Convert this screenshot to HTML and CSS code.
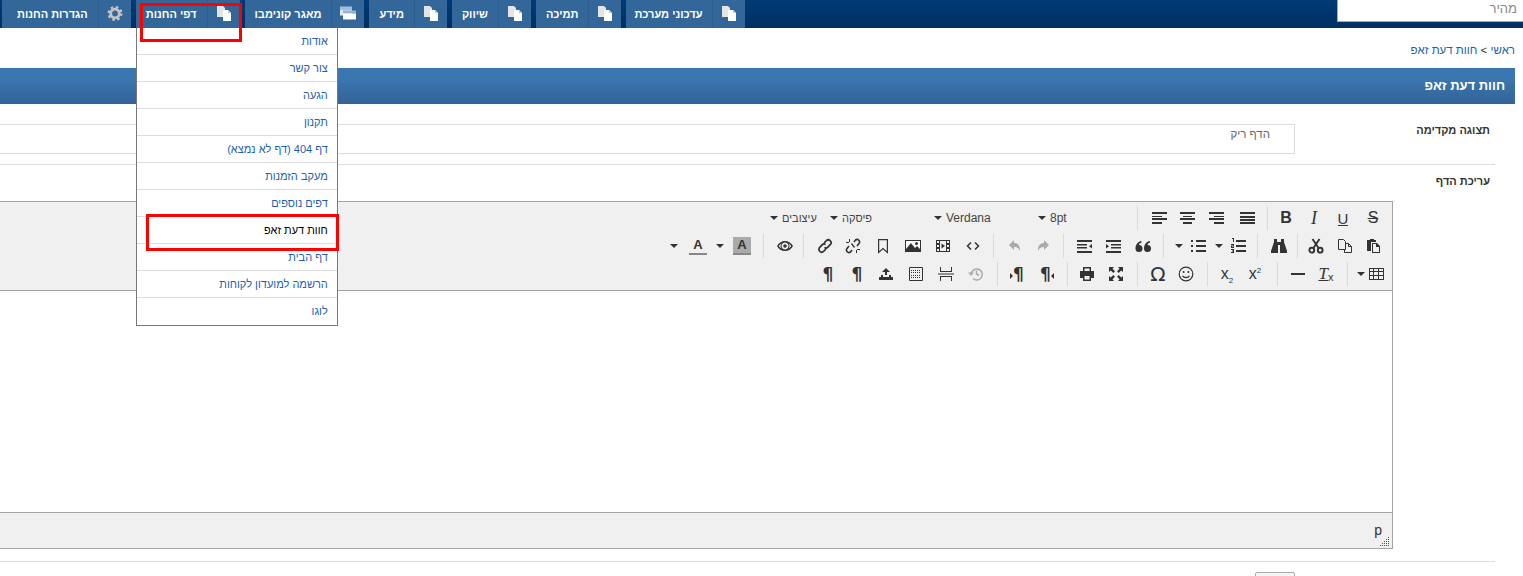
FILE: index.html
```html
<!DOCTYPE html>
<html lang="he" dir="rtl">
<head>
<meta charset="utf-8">
<title>חוות דעת זאפ</title>
<link rel="stylesheet" href="styles.css">
</head>
<body>
<svg class="sprite" xmlns="http://www.w3.org/2000/svg">
  <symbol id="pg" viewBox="0 0 16 15"><path fill="#e4e4e4" d="M1 0h6l2 2v9H1z"/><path fill="#fff" d="M7 4h5l3 3v8H7z"/><path fill="#c8c8c8" d="M12 4l3 3h-3z"/></symbol>
  <symbol id="win" viewBox="0 0 16 14"><path fill="#9fc0e2" d="M0 0h12v3H0z"/><path fill="#dbe8f4" d="M0 3h12v6H0z"/><path fill="#8fb4da" d="M3 4h13v3H3z"/><path fill="#fff" d="M3 7h13v6H3z"/></symbol>
  <symbol id="gear" viewBox="0 0 16 16"><circle cx="8" cy="8" r="4.6" fill="none" stroke="#c4c4c4" stroke-width="3"/><circle cx="8" cy="8" r="6.8" fill="none" stroke="#c4c4c4" stroke-width="2.4" stroke-dasharray="2.7 2.64"/></symbol>
  <symbol id="al" viewBox="0 0 16 16"><path d="M1 2h15v2H1zM1 6h10v1H1zM1 8h15v2H1zM1 12h10v2H1z"/></symbol>
  <symbol id="ac" viewBox="0 0 16 16"><path d="M1 2h15v2H1zM4 6h9v1H4zM1 8h15v2H1zM4 12h9v2H4z"/></symbol>
  <symbol id="ar" viewBox="0 0 16 16"><path d="M1 2h15v2H1zM6 6h10v1H6zM1 8h15v2H1zM6 12h10v2H6z"/></symbol>
  <symbol id="aj" viewBox="0 0 16 16"><path d="M1 2h15v2H1zM1 6h15v2H1zM1 9h15v2H1zM1 12h15v2H1z"/></symbol>
  <symbol id="out" viewBox="0 0 16 16"><path d="M1 2h15v2H1zM1 6h10v1.500H1zM1 9h10v1.500H1zM1 13h15v2H1zM16 6v4.500l-3-2.250z"/></symbol>
  <symbol id="ind" viewBox="0 0 16 16"><path d="M1 2h15v2H1zM6 6h10v1.500H6zM6 9h10v1.500H6zM1 13h15v2H1zM1 6v4.500l3-2.250z"/></symbol>
  <symbol id="quote" viewBox="0 0 16 16"><path d="M4 7a3.500 3.500 0 1 1-3.500 3.500C.5 6.500 3 3.500 6.500 3v1.500C5 5 4 6 4 7zM12.500 7a3.500 3.500 0 1 1-3.500 3.500C9 6.500 11.500 3.500 15 3v1.500c-1.500.5-2.500 1.500-2.500 2.500z"/></symbol>
  <symbol id="bul" viewBox="0 0 16 16"><path d="M1 2h2v2H1zM6 2h10v2H6zM1 7h2v2H1zM6 7h10v2H6zM1 12h2v2H1zM6 12h10v2H6z"/></symbol>
  <symbol id="num" viewBox="0 0 16 16"><path d="M6 2h10v2H6zM6 7h10v2H6zM6 12h10v2H6zM2 0h2v4H3V1H2zM1 6h3v2.500H2v.5h2v1H1V7.500h2V7H1zM1 11h3v4H1v-1h2v-.5H2v-1h1V12H1z"/></symbol>
  <symbol id="bin" viewBox="0 0 16 16"><path d="M3 1h3v3h4V1h3v3l3 9v2H9V7H7v8H0v-2l3-9z"/></symbol>
  <symbol id="cut" viewBox="0 0 16 16"><g fill="none" stroke="#333" stroke-width="1.900"><circle cx="3.800" cy="12.200" r="2.400"/><circle cx="12.200" cy="12.200" r="2.400"/><path d="M5.300 10.300L11.500 1M10.700 10.300L4.500 1"/></g></symbol>
  <symbol id="copy" viewBox="0 0 16 16"><path fill="none" stroke="#333" d="M1.500 1.500h5l2 2v8h-7zM8.500 5.500h3l3 3v6h-7v-3M11.500 5.500v3h3"/></symbol>
  <symbol id="paste" viewBox="0 0 16 16"><path d="M5 1h4v1h2v2H6v9H2V2h3z"/><path d="M7 5h5l3 3v7H7zM8 6v8h6V9h-3V6z" fill-rule="evenodd"/></symbol>
  <symbol id="link" viewBox="0 0 16 16"><g transform="translate(1 1) scale(.875)"><path fill="none" stroke="#333" stroke-width="2" d="M7 4.500l2.500-2.500a2.500 2.500 0 0 1 4.500 4.500L11 9.500a2.500 2.500 0 0 1-3.500 0M9 11.500L6.500 14A2.500 2.500 0 0 1 2 9.500L5 6.500a2.500 2.500 0 0 1 3.500 0"/></g></symbol>
  <symbol id="unlink" viewBox="0 0 16 16"><path fill="none" stroke="#333" stroke-width="1.600" d="M9 4l1.500-2a2.500 2.500 0 0 1 3.500 3.500L12 8M7 12l-1.500 2A2.500 2.500 0 0 1 2 10.500L4 8"/><path d="M1 4h3v1H1zM12 11h3v1h-3zM4 1h1v3H4zM11 12h1v3h-1zM6 6l1-1 3 4-1 1z"/></symbol>
  <symbol id="book" viewBox="0 0 16 16"><path fill="none" stroke="#333" stroke-width="1.200" d="M3.600 1.600h8.800v12.800L8 10.500l-4.400 3.900z"/></symbol>
  <symbol id="img" viewBox="0 0 16 16"><path d="M0 2h16v12H0z"/><path fill="#fff" d="M1 3h14v8l-3-3-2 2-4-5-5 6z"/><circle cx="11.500" cy="5.500" r="1.500"/></symbol>
  <symbol id="media" viewBox="0 0 16 16"><path d="M1 2h14v12H1zM2 3v2h2V3zM2 7v2h2V7zM2 11v2h2v-2zM12 3v2h2V3zM12 7v2h2V7zM12 11v2h2v-2zM5 3v10h6V3z" fill-rule="evenodd"/><path d="M6.500 5.500l3.500 2.500-3.500 2.500z"/></symbol>
  <symbol id="code" viewBox="0 0 16 16"><path fill="none" stroke="#333" stroke-width="1.500" d="M6 4.500L2.500 8 6 11.500M10 4.500L13.500 8 10 11.500"/></symbol>
  <symbol id="undo" viewBox="0 0 16 16"><path d="M7 2L2 7l5 5V9c3 0 5 1 6 4 .5-5-2-8-6-8z"/></symbol>
  <symbol id="redo" viewBox="0 0 16 16"><path d="M9 2l5 5-5 5V9c-3 0-5 1-6 4-.5-5 2-8 6-8z"/></symbol>
  <symbol id="eye" viewBox="0 0 16 16"><path fill-rule="evenodd" d="M8 3c3.500 0 6.500 2 8 5-1.500 3-4.500 5-8 5s-6.500-2-8-5c1.500-3 4.500-5 8-5zM8 4.500a3.500 3.500 0 1 0 .01 0zM1.800 8c.8 1.200 1.700 2.100 2.800 2.800a4.600 4.600 0 0 1 0-5.600C3.500 5.900 2.600 6.800 1.800 8zm12.400 0c-.8-1.200-1.700-2.100-2.800-2.800a4.600 4.600 0 0 1 0 5.600c1.100-.7 2-1.600 2.800-2.800z"/><circle cx="8" cy="8" r="1.800"/></symbol>
  <symbol id="table" viewBox="0 0 16 16"><path fill-rule="evenodd" d="M1 2h15v12H1zM2 3v2h3V3zM6 3v2h4V3zM11 3v2h4V3zM2 6v3h3V6zM6 6v3h4V6zM11 6v3h4V6zM2 10v3h3v-3zM6 10v3h4v-3zM11 10v3h4v-3z"/></symbol>
  <symbol id="hr" viewBox="0 0 16 16"><path d="M1 7h14v2H1z"/></symbol>
  <symbol id="smile" viewBox="0 0 16 16"><circle cx="8" cy="8" r="6.800" fill="none" stroke="#333" stroke-width="1.200"/><circle cx="5.600" cy="6" r="1"/><circle cx="10.400" cy="6" r="1"/><path fill="none" stroke="#333" stroke-width="1.200" d="M4.500 9.800c1.500 2.300 5.500 2.300 7 0"/></symbol>
  <symbol id="full" viewBox="0 0 16 16"><path d="M1 1h5L4.500 2.800 7 5.300 5.300 7 2.800 4.500 1 6zM15 1v5l-1.800-1.500L10.700 7 9 5.300l2.500-2.500L10 1zM1 15v-5l1.800 1.500L5.300 9 7 10.700l-2.500 2.500L6 15zM15 15h-5l1.500-1.800L9 10.700 10.700 9l2.500 2.500L15 10z"/></symbol>
  <symbol id="print" viewBox="0 0 16 16"><path fill-rule="evenodd" d="M4 1h8v4h3v7h-3v3H4v-3H1V5h3zM5.500 2.500V5h5V2.500zM5.500 10v3.500h5V10z"/></symbol>
  <symbol id="restore" viewBox="0 0 16 16"><path fill="none" stroke="#aaa" stroke-width="1.500" d="M3.500 7A5.500 5.500 0 1 1 5 12.500M8.500 4.500V8l2.500 1.500"/><path fill="#aaa" d="M0 6.500h6L3 10z"/></symbol>
  <symbol id="pb" viewBox="0 0 16 16"><path d="M2 1h1v4h10V1h1v5H2zM2 15h1v-4h10v4h1v-5H2zM0 7.500h16v1H0z"/></symbol>
  <symbol id="tpl" viewBox="0 0 16 16"><path fill="none" stroke="#333" d="M1.500 1.500h13v13h-13z"/><path fill="none" stroke="#333" stroke-dasharray="1 1" d="M3 4.500h10M3 6.500h10M3 9.500h10M3 11.500h10"/></symbol>
  <symbol id="ins" viewBox="0 0 16 16"><path d="M7 6V9h2V6h3L8 2 4 6zM1 11h14v3H1zM3 9h2v2H3zM11 9h2v2h-2z"/></symbol>
  <symbol id="grip" viewBox="0 0 10 10"><path fill="#8a2a9e" d="M8 0h1v1H8zM6 2h1v1H6zM8 2h1v1H8zM4 4h1v1H4zM6 4h1v1H6zM8 4h1v1H8zM2 6h1v1H2zM4 6h1v1H4zM6 6h1v1H6zM8 6h1v1H8zM0 8h1v1H0zM2 8h1v1H2zM4 8h1v1H4zM6 8h1v1H6zM8 8h1v1H8z"/></symbol>
</svg>

<header class="topbar">
  <nav class="nav">
    <div class="item item-updates"><span class="ico"><svg class="pg"><use href="#pg"/></svg></span><span class="lbl">עדכוני מערכת</span></div>
    <div class="item"><span class="ico"><svg class="pg"><use href="#pg"/></svg></span><span class="lbl">תמיכה</span></div>
    <div class="item"><span class="ico"><svg class="pg"><use href="#pg"/></svg></span><span class="lbl">שיווק</span></div>
    <div class="item"><span class="ico"><svg class="pg"><use href="#pg"/></svg></span><span class="lbl">מידע</span></div>
    <div class="item"><span class="ico"><svg class="pg"><use href="#win"/></svg></span><span class="lbl">מאגר קונימבו</span></div>
    <div class="item has-menu"><span class="ico"><svg class="pg"><use href="#pg"/></svg></span><span class="lbl">דפי החנות</span>
      <ul class="menu">
        <li>אודות</li>
        <li>צור קשר</li>
        <li>הגעה</li>
        <li>תקנון</li>
        <li>דף 404 (דף לא נמצא)</li>
        <li>מעקב הזמנות</li>
        <li>דפים נוספים</li>
        <li class="cur">חוות דעת זאפ</li>
        <li>דף הבית</li>
        <li>הרשמה למועדון לקוחות</li>
        <li>לוגו</li>
      </ul>
    </div>
    <div class="item item-settings"><span class="ico"><svg class="pg"><use href="#gear"/></svg></span><span class="lbl">הגדרות החנות</span></div>
  </nav>
  <div class="search"><span>מהיר</span></div>
</header>

<main class="page">
  <div class="crumbs">ראשי <span class="crumb-sep">&gt;</span> חוות דעת זאפ</div>
  <h1 class="title">חוות דעת זאפ</h1>

  <section class="form">
    <div class="row row-preview">
      <div class="label label-preview">תצוגה מקדימה</div>
      <div class="preview">הדף ריק</div>
    </div>
    <div class="row row-edit">
      <div class="label label-edit">עריכת הדף</div>
      <div class="editor">
        <div class="toolbar">
          <div class="tbrow">
            <span class="t g5 txt s">S</span>
            <span class="t g2 txt u"><span>U</span></span>
            <span class="t g1 txt i">I</span>
            <span class="t txt b">B</span>
            <span class="sep g4"></span>
            <span class="t g6"><svg><use href="#aj"/></svg></span>
            <span class="t g3"><svg><use href="#ar"/></svg></span>
            <span class="t g1"><svg><use href="#ac"/></svg></span>
            <span class="t"><svg><use href="#al"/></svg></span>
            <span class="sep g7"></span>
            <span class="sel sel-size"><span class="caret"></span><span>8pt</span></span>
            <span class="sel sel-font"><span class="caret"></span><span>Verdana</span></span>
            <span class="sel sel-font he"><span class="caret"></span><span>פיסקה</span></span>
            <span class="sel sel-style he"><span class="caret"></span><span>עיצובים</span></span>
          </div>
          <div class="tbrow">
            <span class="t g5"><svg><use href="#paste"/></svg></span>
            <span class="t"><svg><use href="#copy"/></svg></span>
            <span class="t g1"><svg><use href="#cut"/></svg></span>
            <span class="sep g4"></span>
            <span class="t g4"><svg><use href="#bin"/></svg></span>
            <span class="sep g7"></span>
            <span class="t g5"><svg><use href="#num"/></svg></span>
            <span class="c"><span class="caret"></span></span>
            <span class="t g2"><svg><use href="#bul"/></svg></span>
            <span class="c"><span class="caret"></span></span>
            <span class="sep g10"></span>
            <span class="t g6"><svg><use href="#quote"/></svg></span>
            <span class="t g2"><svg><use href="#ind"/></svg></span>
            <span class="t g1"><svg><use href="#out"/></svg></span>
            <span class="sep g6"></span>
            <span class="t g6 off"><svg><use href="#redo"/></svg></span>
            <span class="t off"><svg><use href="#undo"/></svg></span>
            <span class="sep g7"></span>
            <span class="t g6"><svg><use href="#code"/></svg></span>
            <span class="t g2"><svg><use href="#media"/></svg></span>
            <span class="t g2"><svg><use href="#img"/></svg></span>
            <span class="t g2"><svg><use href="#book"/></svg></span>
            <span class="t g2"><svg><use href="#unlink"/></svg></span>
            <span class="t"><svg><use href="#link"/></svg></span>
            <span class="sep g7"></span>
            <span class="t g4"><svg><use href="#eye"/></svg></span>
            <span class="sep g7"></span>
            <span class="t g7 txt a hl"><span>A</span></span>
            <span class="c g3"><span class="caret"></span></span>
            <span class="t g3 txt a"><span>A</span></span>
            <span class="c g5"><span class="caret"></span></span>
          </div>
          <div class="tbrow">
            <span class="t g2"><svg><use href="#table"/></svg></span>
            <span class="c gn4"><span class="caret"></span></span>
            <span class="sep g8"></span>
            <span class="t g7 txt tx"><i>T</i><small>x</small></span>
            <span class="t"><svg><use href="#hr"/></svg></span>
            <span class="sep g6"></span>
            <span class="t g8 txt sc"><span>x<sup>2</sup></span></span>
            <span class="t txt sc"><span>x<sub>2</sub></span></span>
            <span class="sep g5"></span>
            <span class="t g7"><svg><use href="#smile"/></svg></span>
            <span class="t txt om">Ω</span>
            <span class="sep g6"></span>
            <span class="t g7"><svg><use href="#full"/></svg></span>
            <span class="t g1"><svg><use href="#print"/></svg></span>
            <span class="sep g5"></span>
            <span class="t g6 txt para">¶<em class="tri tri-l"></em></span>
            <span class="t g2 txt para"><em class="tri tri-r"></em>¶</span>
            <span class="sep g5"></span>
            <span class="t g7"><svg><use href="#restore"/></svg></span>
            <span class="t g2"><svg><use href="#pb"/></svg></span>
            <span class="t g2"><svg><use href="#tpl"/></svg></span>
            <span class="t g2"><svg><use href="#ins"/></svg></span>
            <span class="t g1 txt para">¶</span>
            <span class="t g1 txt para">¶</span>
          </div>
        </div>
        <div class="content"></div>
        <div class="status"><span class="path">p</span><svg class="grip"><use href="#grip"/></svg></div>
      </div>
    </div>
    <div class="row row-actions">
      <button class="save" type="button"></button>
    </div>
  </section>
</main>

<div class="mark mark-nav"></div>
<div class="mark mark-item"></div>
</body>
</html>
```
FILE: styles.css
```css
* { box-sizing: border-box; }
html, body { margin: 0; padding: 0; height: 576px; overflow: hidden; background: #fff; }
body { font-family: "Liberation Sans", Arial, sans-serif; font-size: 12px; color: #333; position: relative; }
.sprite { position: absolute; width: 0; height: 0; }

.topbar { direction: ltr; display: flex; height: 28px; background: linear-gradient(#003b76, #002f62); }
.nav { direction: rtl; display: flex; gap: 5px; padding-left: 2px; height: 28px; }
.item { display: flex; height: 28px; background: #336699; color: #fff; font-weight: bold; font-size: 11px; position: relative; }
.ico { width: 33px; display: flex; align-items: center; justify-content: center; border-left: 1px solid #2c5d8e; }
.ico .pg { width: 16px; height: 15px; display: block; margin-top: -1px; }
.lbl { padding: 0 10px; line-height: 28px; white-space: nowrap; }
.item-settings .lbl { padding-left: 15px; }
.item-updates .lbl { padding-left: 8px; padding-right: 9px; }
.menu { list-style: none; margin: 0; padding: 0; position: absolute; top: 28px; left: 0; width: 202px; background: #fff; border: 1px solid #777; border-top: 0; font-weight: normal; z-index: 5; }
.menu li { height: 27px; line-height: 26px; padding-right: 9px; border-bottom: 1px solid #ddd; color: #1c5fb0; font-size: 11px; }
.menu li:last-child { border-bottom: 0; }
.menu li.cur { color: #000; }

.search { margin-left: auto; width: 186px; height: 22px; background: #fff; border-left: 1px solid #aaa; border-bottom: 1px solid #aaa; text-align: right; direction: rtl; padding-right: 6px; color: #888; font-size: 13px; line-height: 17px; }

.page { width: 1515px; margin-right: 8px; }
.crumbs { height: 40px; padding-top: 15px; line-height: 14px; color: #1c5fb0; font-size: 11.5px; }
.crumb-sep { color: #333; }
.title { margin: 0; height: 36px; line-height: 36px; padding-right: 10px; font-size: 13px; font-weight: bold; color: #fff; background: linear-gradient(#3a76af 30%, #336397); }

.form { width: 1495px; margin-right: 20px; }
.row { display: flex; }
.row-preview { padding: 20px 0 10px; border-bottom: 1px solid #ddd; height: 61px; }
.label { padding-right: 5px; font-weight: bold; color: #333; font-size: 11px; line-height: 14px; }
.label-preview { width: 200px; margin-top: -1px; }
.label-edit { width: 102px; padding-top: 9px; }
.preview { width: 1295px; height: 30px; border: 1px solid #ddd; border-left: 0; padding: 2px 24px 0 0; color: #666; line-height: 14px; font-size: 11.5px; }

.row-edit { padding-bottom: 12px; border-bottom: 1px solid #ddd; }
.editor { width: 1393px; height: 348px; margin-top: 36px; border: 1px solid #a3a3a3; border-left: 0; display: flex; flex-direction: column; }
.toolbar { height: 89px; background: #f0f0f0; border-bottom: 1px solid #a3a3a3; padding-top: 2px; }
.tbrow { display: flex; height: 28px; align-items: center; }
.t { width: 28px; height: 24px; flex: none; display: flex; align-items: center; justify-content: center; color: #333; }
.t svg { width: 16px; height: 16px; fill: #333; display: block; }
.off svg { fill: #aaa; }
.c { width: 10px; height: 24px; flex: none; display: flex; align-items: center; justify-content: center; }
.caret { display: block; width: 0; height: 0; border-style: solid; border-width: 4px 4px 0; border-color: #333 transparent transparent; }
.sep { width: 1px; height: 24px; flex: none; background: #d9d9d9; }
.g1 { margin-right: 1px; } .g2 { margin-right: 2px; } .g3 { margin-right: 3px; }
.g4 { margin-right: 4px; } .g5 { margin-right: 5px; } .g6 { margin-right: 6px; }
.g7 { margin-right: 7px; } .g8 { margin-right: 8px; } .g10 { margin-right: 10px; }
.gn4 { margin-right: -4px; }

.sel { direction: ltr; flex: none; display: flex; align-items: center; gap: 4px; padding-left: 1px; height: 24px; color: #444; font-size: 12px; }
.sel.he { font-size: 11px; }
.sel-size { width: 100px; }
.sel-font { width: 104px; }
.sel-style { width: 60px; }

.txt { font-size: 15px; font-weight: bold; direction: ltr; font-family: "Liberation Sans", Arial, sans-serif; }
.b { font-size: 16px; }
.s { text-decoration: line-through; font-weight: normal; font-size: 16px; }
.u { font-weight: normal; font-size: 15px; }
.u span { display: block; line-height: 13px; border-bottom: 1px solid #333; margin-top: 1px; }
.i { font-style: italic; font-family: "Liberation Serif", serif; font-size: 18px; font-weight: normal; }
.a { font-size: 13px; }
.a span { display: block; width: 18px; height: 18px; line-height: 15px; text-align: center; border-bottom: 2px solid #888; }
.hl span { background: #aaa; }
.tx { font-size: 17px; font-weight: normal; font-family: "Liberation Serif", serif; }
.tx i { text-decoration: underline; }
.tx small { font-size: 11px; font-family: "Liberation Sans", sans-serif; margin-top: 5px; }
.sc { font-size: 16px; font-weight: normal; }
.sc sup, .sc sub { font-size: 8px; line-height: 0; }
.om { font-family: "DejaVu Sans", sans-serif; font-size: 20px; font-weight: normal; }
.para { font-size: 17px; font-weight: bold; font-family: "DejaVu Sans", sans-serif; }
.tri { display: block; width: 0; height: 0; border-style: solid; margin-top: 4px; }
.tri-l { border-width: 3px 3px 3px 0; border-color: transparent #333 transparent transparent; }
.tri-r { border-width: 3px 0 3px 3px; border-color: transparent transparent transparent #333; }

.content { flex: 1; background: #fff; }
.status { height: 36px; background: #f0f0f0; border-top: 1px solid #a3a3a3; position: relative; }
.path { position: absolute; right: 10px; top: 9px; font-size: 14px; line-height: 16px; color: #333; font-family: "Liberation Sans", sans-serif; }
.grip { position: absolute; right: 2px; bottom: 1px; width: 10px; height: 10px; }

.row-actions { padding: 10px 200px 0 0; }
.save { width: 40px; height: 24px; background: #f5f5f5; border: 1px solid #aaa; border-radius: 2px; padding: 0; }

.mark { position: absolute; border: 3px solid #f00; z-index: 10; }
.mark-nav { left: 140px; top: 3px; width: 102px; height: 39px; }
.mark-item { left: 146px; top: 214px; width: 193px; height: 37px; }
```
